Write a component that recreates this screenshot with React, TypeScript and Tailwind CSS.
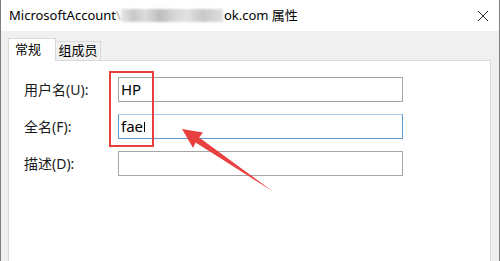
import React from 'react'

const font = { fontFamily: '"Noto Sans", "Noto Sans CJK SC", sans-serif' }

function Field({ label, value, focused, cursor }: { label: string; value?: string; focused?: boolean; cursor?: boolean }) {
  return (
    <div className="flex h-[25px] items-center">
      <div className="w-[94px] text-[14px] text-[#1a1a1a]">{label}</div>
      <div
        className={
          'flex h-[25px] w-[285px] items-center border px-[2px] text-[15px] text-black ' +
          (focused ? 'border-[#5b9bd5] border-t-[#a8cbee] bg-white' : 'border-[#a5a5a5] bg-white')
        }
      >
        <span className="leading-none">{value}</span>
        {cursor && <span className="ml-[1px] h-[10px] w-px bg-black" />}
      </div>
    </div>
  )
}

export default function App() {
  return (
    <div className="relative h-[261px] w-[500px] overflow-hidden border-x border-[#7f7f7f] bg-[#f0f0f0]" style={font}>
      {/* title bar */}
      <div className="flex h-[31px] items-center justify-between bg-white pl-[8px] pr-[10px]">
        <div className="flex items-center text-[13px] text-black">
          <span>MicrosoftAccount</span>
          <span className="text-[#aaa]">\</span>
          <span className="inline-block h-[13px] w-[102px] bg-[linear-gradient(90deg,#e6e6e6,#c9c9c9_12%,#dcdcdc_24%,#bdbdbd_38%,#d6d6d6_52%,#e2e2e2_64%,#c8c8c8_80%,#dedede)] blur-[1px]" />
          <span className="ml-[1px]">ok.com 属性</span>
        </div>
        <svg width="12" height="12" viewBox="0 0 12 12" className="text-[#333]">
          <path d="M1 1 L11 11 M11 1 L1 11" stroke="currentColor" strokeWidth="1" fill="none" />
        </svg>
      </div>

      {/* tabs */}
      <div className="flex items-end pl-[7px] pt-[7px]">
        <div className="relative z-10 -mb-px flex h-[23px] w-[48px] items-center border border-b-0 border-[#d9d9d9] bg-white pl-[6px] text-[13px] text-black">
          常规
        </div>
        <div className="flex h-[19px] w-[45px] items-center justify-center border border-b-0 border-l-0 border-[#d9d9d9] bg-[#f0f0f0] text-[13px] text-black">
          组成员
        </div>
      </div>

      {/* panel */}
      <div className="ml-[7px] mr-[8px] h-[220px] border border-[#d9d9d9] bg-white pl-[15px] pt-[16px]">
        <div className="flex flex-col gap-[12px]">
          <Field label="用户名(U):" value="HP" />
          <Field label="全名(F):" value="fae" focused cursor />
          <Field label="描述(D):" />
        </div>
      </div>

      {/* annotations */}
      <div className="pointer-events-none absolute left-[108px] top-[71px] h-[76px] w-[45px] border-2 border-[#e5403f]" />
      <svg className="pointer-events-none absolute left-0 top-0" width="500" height="261" viewBox="0 0 500 261">
        <polygon
          points="181,129 202,132.5 198.2,137.4 273.3,192.4 272.7,192 194.6,142.6 192,148"
          fill="#e8403f"
        />
      </svg>
    </div>
  )
}
